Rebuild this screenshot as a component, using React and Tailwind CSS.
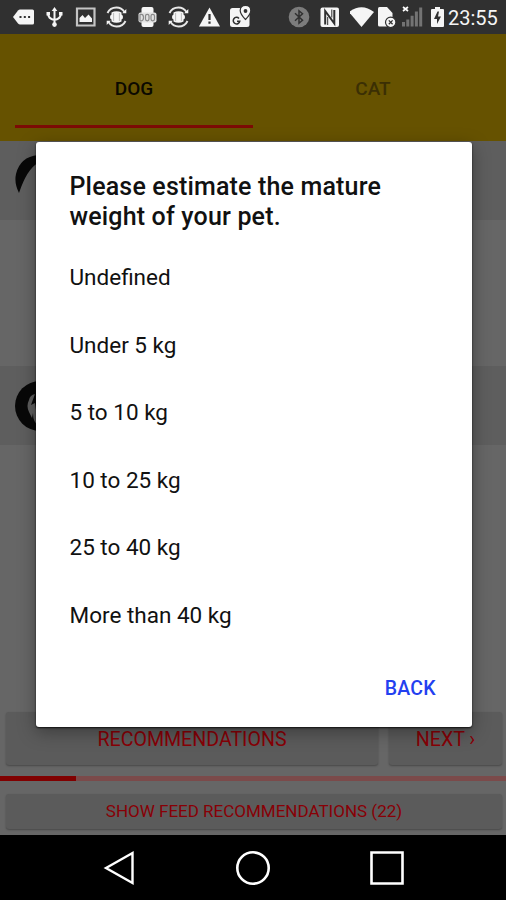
import React from 'react'

const OPTIONS = ['Undefined', 'Under 5 kg', '5 to 10 kg', '10 to 25 kg', '25 to 40 kg', 'More than 40 kg']

function StatusIcon({ children, width = 21 }) {
  return (
    <svg width={width} height="22" viewBox={`0 0 ${width} 22`} fill="#f5f5f5" className="shrink-0">
      {children}
    </svg>
  )
}

function SyncIcon() {
  return (
    <StatusIcon>
      <g fill="none" stroke="#e8e8e8" strokeWidth="1.9">
        <path d="M1.5 7Q4 1.5 10.5 1.5Q15.5 1.5 18.5 6" />
        <path d="M19.5 15Q17 20.5 10.5 20.5Q5.5 20.5 2.5 16" />
      </g>
      <path d="M20.3 3V7.3H16.2ZM0.7 19V14.7H4.8Z" />
      <path d="M4 11Q4 9 5.5 8.5V6.5Q10.5 3.8 15.5 6.5V8.5Q17 9 17 11T15.5 13.5V15.5Q10.5 18.2 5.5 15.5V13.5Q4 13 4 11Z" />
      <path d="M7.6 7V15M13.4 7V15" stroke="#b5b5b5" strokeWidth="0.9" />
    </StatusIcon>
  )
}

function StatusBar() {
  return (
    <div className="flex h-[34px] items-center justify-between bg-[#303030] pl-[13px] pr-[8px]">
      <div className="flex items-center gap-[10px]">
        <StatusIcon>
          <path d="M0 11L5 4.5Q6 3.5 7 3.5H19.5Q21 3.5 21 5V17Q21 18.5 19.5 18.5H7Q6 18.5 5 17.5Z" />
          <path d="M6.5 10h2v2h-2zM10.8 10h2v2h-2zM15.1 10h2v2h-2z" fill="#303030" />
        </StatusIcon>
        <StatusIcon>
          <path d="M10.5 1L13.3 5H7.7ZM2.5 6H6V9.5H2.5ZM15 6H18.5V9.5H15Z" />
          <path d="M10.5 3V18M4.2 8Q4 12.5 10.5 14Q17 12.5 16.8 8" fill="none" stroke="#f5f5f5" strokeWidth="2" />
          <circle cx="10.5" cy="18.6" r="2.3" />
        </StatusIcon>
        <StatusIcon>
          <path d="M2 2.5H19.5V19.5H2Z" fill="none" stroke="#c4c4c4" strokeWidth="2.2" />
          <path d="M4.5 16V12L7.5 9L10 12L13.5 8.5L17 12.5V16Z" />
        </StatusIcon>
        <SyncIcon />
        <StatusIcon>
          <path d="M4.5 3Q4.5 1 6.5 1H14.5Q16.5 1 16.5 3V19Q16.5 21 14.5 21H6.5Q4.5 21 4.5 19Z" />
          <rect x="1.5" y="6.5" width="18" height="10" rx="2" fill="#e2e2e2" />
          <g fill="none" stroke="#8a8a8a" strokeWidth="1.2">
            <path d="M3 8.3H4.5Q6.5 8.3 6.5 11.5T4.5 14.8H3Z" />
            <rect x="8.5" y="8.3" width="3.5" height="6.5" rx="1.7" />
            <rect x="14" y="8.3" width="3.5" height="6.5" rx="1.7" />
          </g>
        </StatusIcon>
        <SyncIcon />
        <StatusIcon>
          <path d="M10.5 1.5L21 20.5H0Z" />
          <path d="M9.4 8h2.2v6H9.4zM9.4 15.5h2.2v2.3H9.4z" fill="#303030" />
        </StatusIcon>
        <StatusIcon>
          <rect x="0" y="2" width="19.5" height="19" rx="2.5" />
          <path d="M15.5 -0.5Q20.8 -0.5 20.8 4.5Q20.8 8 15.5 13.5Q10.2 8 10.2 4.5Q10.2 -0.5 15.5 -0.5Z" stroke="#303030" strokeWidth="1.2" />
          <circle cx="15.5" cy="5" r="1.9" fill="#303030" />
          <path d="M9 12.4A3.3 3.3 0 1 0 9.8 15.2H7" fill="none" stroke="#303030" strokeWidth="1.5" />
        </StatusIcon>
      </div>

      <div className="flex items-center">
        <div className="mr-[4px] flex items-center gap-[8px]">
          <StatusIcon width={24}>
            <circle cx="11" cy="11" r="10.3" fill="#7c7c7c" />
            <path d="M7 7.3L14.5 14.2L11 17.2V4.8L14.5 7.8L7 14.7" fill="none" stroke="#303030" strokeWidth="1.5" />
          </StatusIcon>
          <StatusIcon width={22}>
            <rect x="0.5" y="1.5" width="18.5" height="19.5" rx="2" />
            <path d="M5.2 18.5V5L14.3 17.5V4" fill="none" stroke="#303030" strokeWidth="2" />
            <path d="M7.7 11V19M11.8 3.5V11.5" stroke="#303030" strokeWidth="1" />
          </StatusIcon>
          <StatusIcon width={24}>
            <path d="M-1 6Q11.5 -3.5 24 6L11.5 21Z" />
          </StatusIcon>
        </div>
        <div className="flex items-center gap-[4px]">
          <StatusIcon width={20}>
            <path d="M0 2.5Q0 1 1.5 1H9L14.5 7V20.5H1.5Q0 20.5 0 19Z" />
            <circle cx="12.7" cy="16.3" r="5.2" stroke="#303030" strokeWidth="1.2" />
            <path d="M10.8 14.4L14.6 18.2M14.6 14.4L10.8 18.2" stroke="#303030" strokeWidth="1.3" />
          </StatusIcon>
          <StatusIcon width={22}>
            <path d="M0 16h3v4.5H0zM4.3 13.5h3v7h-3zM8.6 9.8h3v10.7h-3zM12.9 5.5h3v15h-3zM17.2 1.5h3v19h-3z" fill="#737373" />
            <path d="M1 1L6 5M6 1L1 5" stroke="#fff" strokeWidth="1.7" />
          </StatusIcon>
          <StatusIcon width={20}>
            <path d="M7 1H12V3H15Q16 3 16 4V20Q16 21 15 21H4Q3 21 3 20V4Q3 3 4 3H7Z" />
            <path d="M9.5 5.5L6 13H9V18L13 10.5H10L11 5.5Z" fill="#303030" />
          </StatusIcon>
        </div>
        <span className="w-[50px] whitespace-nowrap pt-[2px] text-[20px] leading-none text-[#f5f5f5]">23:55</span>
      </div>
    </div>
  )
}

function Tabs() {
  return (
    <div className="flex h-[107px] bg-[#665200] px-[15px] pt-[20px] text-[19px] font-medium">
      <div className="flex h-[74px] w-[239px] items-center justify-center border-b-[3px] border-[#7c0b05] text-[#0b0900]">
        <span>DOG</span>
      </div>
      <div className="flex h-[74px] w-[239px] items-center justify-center text-[#3b2f04]">
        <span className="pb-[3px] pl-[2px]">CAT</span>
      </div>
    </div>
  )
}

function NavBar() {
  return (
    <div className="flex h-[65px] items-center justify-between bg-black pl-[102px] pr-[101px]">
      <svg width="34" height="36" viewBox="0 0 34 36" fill="none" stroke="#fff" strokeWidth="2.4">
        <path d="M4 18L30.5 3V33Z" />
      </svg>
      <svg width="36" height="36" viewBox="0 0 36 36" fill="none" stroke="#fff" strokeWidth="2.6">
        <circle cx="18" cy="18" r="15.7" />
      </svg>
      <svg width="36" height="36" viewBox="0 0 36 36" fill="none" stroke="#fff" strokeWidth="2.6">
        <path d="M2.5 2.5H33.5V33.5H2.5Z" />
      </svg>
    </div>
  )
}

export default function App() {
  return (
    <div className="relative flex h-[900px] w-[506px] flex-col overflow-hidden bg-[#666666] font-['Roboto',sans-serif]">
      <StatusBar />
      <Tabs />

      <div className="h-[79px] bg-[#5e5e5e] pl-[15px] pt-[14px]">
        <svg width="50" height="50" viewBox="0 0 50 50" fill="#080808">
          <path d="M4 38Q-1 28 1 19Q5 2 23 0V8Q12 14 4 38Z" />
        </svg>
      </div>
      <div className="h-[146px]" />
      <div className="h-[79px] bg-[#5e5e5e] pl-[15px] pt-[15px]">
        <svg width="50" height="50" viewBox="0 0 50 50">
          <circle cx="25" cy="25" r="25" fill="#080808" />
          <path d="M20 13Q15 14 14 19Q11 25 14 31L17 37L18 32Q18 42 24 45V31L21 29L20 22L16 24Z" fill="#5e5e5e" />
        </svg>
      </div>
      <div className="flex-1" />

      <div className="flex gap-[11px] pl-[6px] pr-[4px] text-[19.6px] text-[#880006]">
        <div className="flex h-[53px] w-[372px] items-center justify-center rounded-[3px] bg-[#5b5b5b] pt-[2px] shadow-[0_1px_2px_rgba(0,0,0,0.3)]">
          RECOMMENDATIONS
        </div>
        <div className="flex h-[53px] flex-1 items-center justify-center rounded-[3px] bg-[#5b5b5b] pt-[2px] shadow-[0_1px_2px_rgba(0,0,0,0.3)]">
          NEXT ›
        </div>
      </div>
      <div className="mt-[11px] h-[5px] bg-[#7b4a4a]">
        <div className="h-full w-[76px] bg-[#800000]" />
      </div>
      <div className="mb-[6px] ml-[6px] mr-[4px] mt-[13px] flex h-[35px] items-center justify-center rounded-[3px] bg-[#5b5b5b] text-[17px] text-[#880006] shadow-[0_1px_2px_rgba(0,0,0,0.3)]">
        SHOW FEED RECOMMENDATIONS (22)
      </div>
      <NavBar />

      {/* Weight dialog */}
      <div className="absolute left-[36px] top-[142px] flex h-[585px] w-[436px] flex-col rounded-[3px] bg-white px-[33.5px] pt-[30px] text-[#111] shadow-[0_1px_2px_rgba(0,0,0,0.8),0_5px_18px_rgba(0,0,0,0.35)]">
        <h1 className="text-[25px] font-medium leading-[29.5px] tracking-[0.17px]">
          Please estimate the mature
          <br />
          weight of your pet.
        </h1>
        <ul className="mt-[13.5px] text-[22.5px]">
          {OPTIONS.map((option) => (
            <li key={option} className="flex h-[67.5px] items-center">
              {option}
            </li>
          ))}
        </ul>
        <button className="mr-[2.5px] mt-[27.5px] self-end text-[19.5px] font-medium leading-[24px] tracking-[0.3px] text-[#2340f0]">BACK</button>
      </div>
    </div>
  )
}
